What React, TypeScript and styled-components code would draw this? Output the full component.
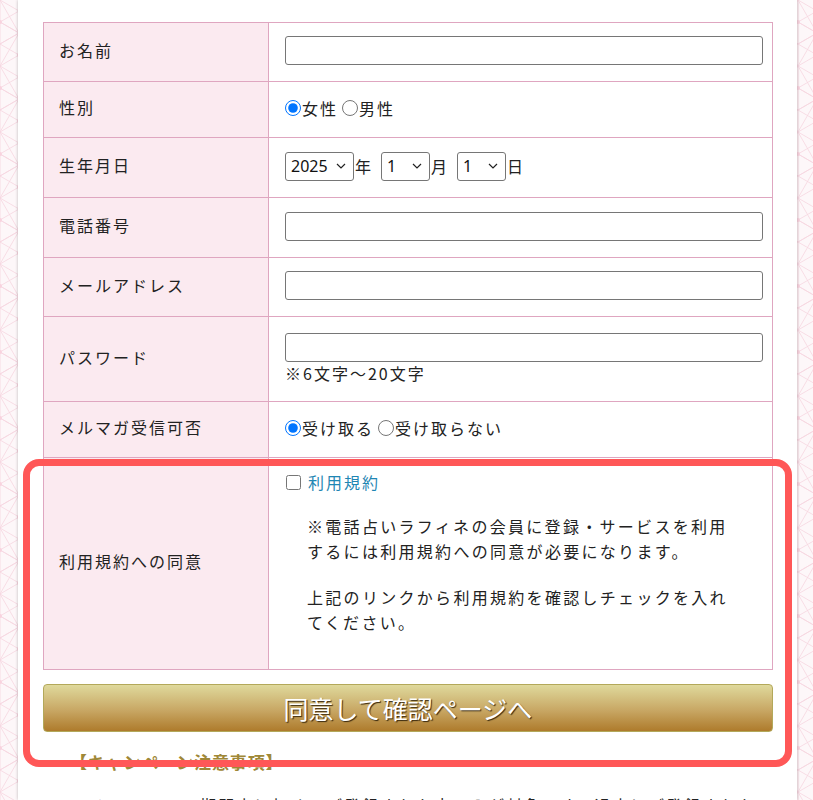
import styled, { createGlobalStyle } from "styled-components";

const asanoha = encodeURIComponent(
  `<svg xmlns='http://www.w3.org/2000/svg' width='38' height='66' viewBox='0 0 38 66'><g fill='none' stroke='#f6d5df' stroke-width='0.8'><path d='M0 0L19 11L38 0M0 22L19 11L38 22M19 11V33M0 22L19 33L38 22M0 44L19 33L38 44M19 33V55M0 44L19 55L38 44M0 66L19 55L38 66M0 0V66M38 0V66M0 22L38 44M0 44L38 22M0 0L38 66M38 0L0 66'/></g><g fill='#f8d3de'><circle cx='0' cy='22' r='2'/><circle cx='38' cy='22' r='2'/><circle cx='19' cy='55' r='2'/></g></svg>`
);

const chevron = encodeURIComponent(
  `<svg xmlns='http://www.w3.org/2000/svg' width='10' height='6' viewBox='0 0 10 6'><path d='M1 1L5 5L9 1' fill='none' stroke='#222' stroke-width='1.2'/></svg>`
);

const GlobalStyle = createGlobalStyle`
  html, body {
    margin: 0;
    padding: 0;
  }
  body {
    background-color: #fdf7f9;
    background-image: url("data:image/svg+xml,${asanoha}");
    font-family: "Noto Sans CJK JP", "Noto Sans", sans-serif;
    color: #222;
    overflow: hidden;
  }
`;

const Page = styled.div`
  position: relative;
  width: 779px;
  margin: 0 0 0 18px;
  height: 800px;
  overflow: hidden;
  background: #fff;
  box-shadow: 0 0 3px rgba(0, 0, 0, 0.25);
  padding: 22px 24px 0 25px;
  box-sizing: border-box;
`;

const FormTable = styled.table`
  width: 730px;
  table-layout: fixed;
  border-collapse: collapse;
  font-size: 16px;
  letter-spacing: 2px;
`;

const Row = styled.tr<{ $h: number }>`
  height: ${(p) => p.$h}px;
`;

const Label = styled.th`
  background: #fbeaf0;
  border: 1px solid #dfa6c0;
  padding: 0 15px 5px;
  text-align: left;
  font-weight: normal;
  vertical-align: middle;
`;

const Cell = styled.td<{ $top?: boolean }>`
  border: 1px solid #dfa6c0;
  padding: ${(p) => (p.$top ? "12px 11px 0 16px" : "0 11px 3px 16px")};
  vertical-align: ${(p) => (p.$top ? "top" : "middle")};
`;

const TextInput = styled.input`
  display: block;
  width: 478px;
  height: 29px;
  box-sizing: border-box;
  border: 1px solid #767676;
  border-radius: 3px;
  background: #fff;
  margin: 0;
`;

const Inline = styled.div`
  display: flex;
  align-items: center;
`;

const Radio = styled.input.attrs({ type: "radio" })`
  width: 16px;
  height: 16px;
  margin: 0 1px 0 0;
  accent-color: #0075ff;
`;

const Choice = styled.label`
  display: inline-flex;
  align-items: center;
  margin-right: 4px;
`;

const Select = styled.select<{ $w: number }>`
  appearance: none;
  width: ${(p) => p.$w}px;
  height: 29px;
  font-size: 16px;
  font-family: "Segoe UI", "Noto Sans", sans-serif;
  letter-spacing: 0;
  border: 1px solid #767676;
  border-radius: 3px;
  background: #fff url("data:image/svg+xml,${chevron}") no-repeat right 7px center;
  color: #111;
  padding: 0 0 0 5px;
  margin-right: 1px;
`;

const Unit = styled.span`
  margin-right: 8px;
`;

const Note = styled.div`
  margin-top: 1px;
  line-height: 20px;
`;

const Check = styled.input.attrs({ type: "checkbox" })`
  width: 15px;
  height: 15px;
  margin: 0 7px 0 1px;
`;

const TermsLink = styled.a`
  color: #1f86b3;
  text-decoration: none;
`;

const Para = styled.p`
  margin: 20px 22px 0;
  line-height: 25px;
  letter-spacing: 2.3px;
  & + & {
    margin-top: 21px;
  }
`;

const SubmitButton = styled.button`
  display: block;
  width: 730px;
  height: 48px;
  margin-top: 14px;
  border: 1px solid #b3a85a;
  border-radius: 4px;
  background: linear-gradient(to bottom, #dfd99c 0%, #c8a764 55%, #ae7b2c 100%);
  color: #fff;
  font-family: "Noto Sans CJK JP", "Noto Sans", sans-serif;
  font-size: 25px;
  letter-spacing: 0;
  text-shadow: 1px 1px 1px #3a2a10;
  cursor: pointer;
`;

const NoticeTitle = styled.h3`
  margin: 18px 0 0 27px;
  font-size: 17px;
  font-weight: bold;
  color: #9f8838;
  letter-spacing: 0.05em;
  line-height: 24px;
`;

const NoticeText = styled.p`
  margin: 18px 0 0 32px;
  font-size: 16px;
  letter-spacing: 2px;
  line-height: 26px;
`;

const Highlight = styled.div`
  position: absolute;
  left: 5px;
  top: 459px;
  width: 769px;
  height: 308px;
  box-sizing: border-box;
  border: 7px solid #ff5757;
  border-radius: 16px;
  pointer-events: none;
`;

export default function App() {
  return (
    <>
      <GlobalStyle />
      <Page>
        <FormTable>
          <colgroup>
            <col style={{ width: 225 }} />
            <col />
          </colgroup>
          <tbody>
            <Row $h={59}>
              <Label>お名前</Label>
              <Cell>
                <TextInput type="text" />
              </Cell>
            </Row>
            <Row $h={56}>
              <Label>性別</Label>
              <Cell>
                <Inline>
                  <Choice>
                    <Radio name="sex" defaultChecked />
                    女性
                  </Choice>
                  <Choice>
                    <Radio name="sex" />
                    男性
                  </Choice>
                </Inline>
              </Cell>
            </Row>
            <Row $h={60}>
              <Label>生年月日</Label>
              <Cell>
                <Inline>
                  <Select $w={69} defaultValue="2025">
                    <option>2025</option>
                  </Select>
                  <Unit>年</Unit>
                  <Select $w={49} defaultValue="1">
                    <option>1</option>
                  </Select>
                  <Unit>月</Unit>
                  <Select $w={49} defaultValue="1">
                    <option>1</option>
                  </Select>
                  <span>日</span>
                </Inline>
              </Cell>
            </Row>
            <Row $h={60}>
              <Label>電話番号</Label>
              <Cell>
                <TextInput type="tel" />
              </Cell>
            </Row>
            <Row $h={59}>
              <Label>メールアドレス</Label>
              <Cell>
                <TextInput type="email" />
              </Cell>
            </Row>
            <Row $h={85}>
              <Label>パスワード</Label>
              <Cell>
                <TextInput type="password" />
                <Note>※6文字～20文字</Note>
              </Cell>
            </Row>
            <Row $h={56}>
              <Label>メルマガ受信可否</Label>
              <Cell>
                <Inline>
                  <Choice>
                    <Radio name="mag" defaultChecked />
                    受け取る
                  </Choice>
                  <Choice>
                    <Radio name="mag" />
                    受け取らない
                  </Choice>
                </Inline>
              </Cell>
            </Row>
            <Row $h={212}>
              <Label>利用規約への同意</Label>
              <Cell $top>
                <Inline>
                  <Check />
                  <TermsLink href="#">利用規約</TermsLink>
                </Inline>
                <Para>
                  ※電話占いラフィネの会員に登録・サービスを利用するには利用規約への同意が必要になります。
                </Para>
                <Para>上記のリンクから利用規約を確認しチェックを入れてください。</Para>
              </Cell>
            </Row>
          </tbody>
        </FormTable>
        <SubmitButton type="button">同意して確認ページへ</SubmitButton>
        <NoticeTitle>【キャンペーン注意事項】</NoticeTitle>
        <NoticeText>
          ・キャンペーン期間中に初めてご登録された方のみが対象です。過去にご登録された方は対象外となります。
        </NoticeText>
        <Highlight />
      </Page>
    </>
  );
}
